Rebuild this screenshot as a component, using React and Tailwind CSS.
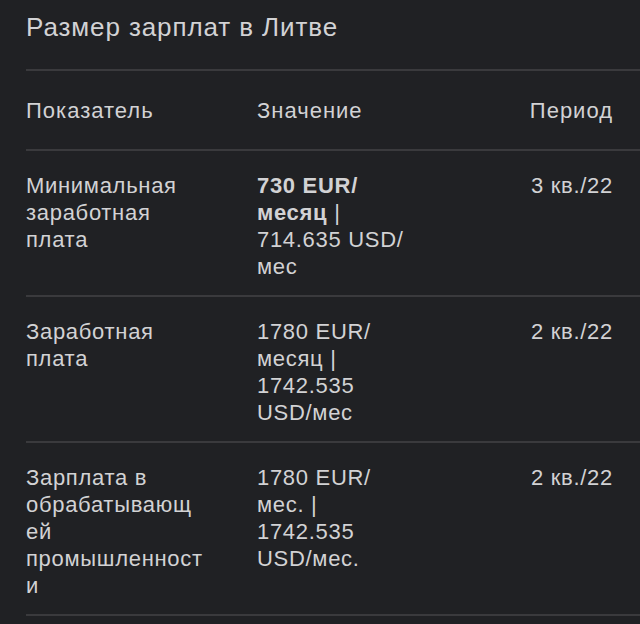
import React from "react";

const rows = [
  {
    name: ["Минимальная", "заработная", "плата"],
    value: (
      <>
        <span className="font-bold">730 EUR/</span>
        <br />
        <span className="font-bold">месяц</span> |
        <br />
        714.635 USD/
        <br />
        мес
      </>
    ),
    period: "3 кв./22",
  },
  {
    name: ["Заработная", "плата"],
    value: (
      <>
        1780 EUR/
        <br />
        месяц |
        <br />
        1742.535
        <br />
        USD/мес
      </>
    ),
    period: "2 кв./22",
  },
  {
    name: ["Зарплата в", "обрабатывающ", "ей", "промышленност", "и"],
    value: (
      <>
        1780 EUR/
        <br />
        мес. |
        <br />
        1742.535
        <br />
        USD/мес.
      </>
    ),
    period: "2 кв./22",
  },
];

export default function App() {
  return (
    <div
      className="w-[640px] h-[624px] bg-[#202124] text-[#d2d2d4] pl-[26px] overflow-hidden"
      style={{ fontFamily: '"Liberation Sans", Arial, sans-serif' }}
    >
      {/* title */}
      <div className="h-[71px] border-b-2 border-[#3a3a3d] pt-[12px]">
        <h1 className="text-[26px] leading-[30px] tracking-[0.9px]">Размер зарплат в Литве</h1>
      </div>

      {/* header */}
      <div className="h-[80px] border-b-2 border-[#3a3a3d] grid grid-cols-[231px_1fr_auto] items-center pr-[27px] text-[22px] tracking-[1px]">
        <div>Показатель</div>
        <div>Значение</div>
        <div className="text-right">Период</div>
      </div>

      {rows.map((row, i) => (
        <div
          key={i}
          className="grid grid-cols-[231px_1fr_auto] pt-[21px] pb-[15px] pr-[27px] border-b-2 border-[#3a3a3d] text-[22px] leading-[27px] tracking-[0.7px]"
        >
          <div>
            {row.name.map((line, j) => (
              <div key={j}>{line}</div>
            ))}
          </div>
          <div>{row.value}</div>
          <div className="text-right">{row.period}</div>
        </div>
      ))}
    </div>
  );
}
